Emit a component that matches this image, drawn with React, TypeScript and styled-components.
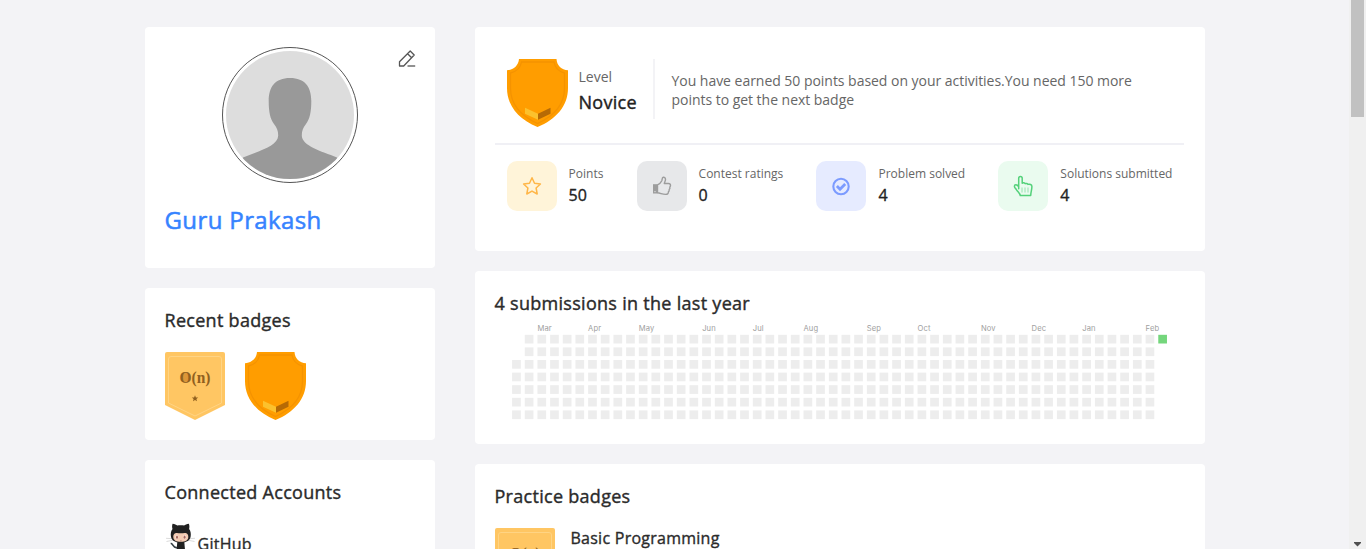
import React from "react";
import styled, { createGlobalStyle, css } from "styled-components";

const GlobalStyle = createGlobalStyle`
  * { box-sizing: border-box; }
  body {
    margin: 0;
    background: #f3f3f6;
    color: #2b2b2b;
    font-family: "Open Sans", sans-serif;
    overflow: hidden;
  }
  svg { display: block; flex: none; }
`;

/* Medium weight: the regular face, slightly thickened and spaced. */
const medium = css`
  font-weight: 400;
  letter-spacing: 0.016em;
  -webkit-text-stroke: 0.022em currentColor;
`;

const Page = styled.div`
  display: flex;
  height: 549px;
  overflow: hidden;
`;

const Content = styled.main`
  flex: 1;
  display: flex;
  align-items: flex-start;
  gap: 40px;
  padding: 27px 0 0 145px;
`;

const Column = styled.div<{ $width: number }>`
  width: ${(p) => p.$width}px;
  display: flex;
  flex-direction: column;
  gap: 20px;
`;

const Card = styled.section<{ $height: number }>`
  height: ${(p) => p.$height}px;
  padding: 20px;
  background: #fff;
  border-radius: 4px;
`;

const CardTitle = styled.h2`
  ${medium}
  margin: 0 0 0 -0.5px;
  font-size: 18px;
  line-height: 25px;
`;

const ProfileTop = styled.div`
  display: grid;
  grid-template-columns: 1fr 136px 1fr;
`;

const Avatar = styled.div`
  grid-column: 2;
  width: 136px;
  height: 136px;
  padding: 3px;
  border: 1px solid #555;
  border-radius: 50%;

  svg { border-radius: 50%; }
`;

const EditButton = styled.button`
  justify-self: end;
  align-self: start;
  margin: 2.5px -1px 0 0;
  padding: 0;
  border: 0;
  background: none;
  color: #555;
`;

const Name = styled.h1`
  ${medium}
  margin: 20px 0 0 -0.5px;
  color: #3683ff;
  font-size: 24px;
  line-height: 33px;
`;

const BadgeRow = styled.div`
  display: flex;
  gap: 20px;
  margin-top: 19px;
`;

const AccountRow = styled.div`
  display: flex;
  align-items: flex-start;
  gap: 2px;
  margin-top: 18px;
`;

const AccountName = styled.span`
  ${medium}
  margin: 10px 0 0 -0.5px;
  font-size: 16px;
  line-height: 22px;
`;

const LevelRow = styled.div`
  display: flex;
  height: 96px;
  padding: 12px 12px 0;
`;

const LevelInfo = styled.div`
  width: 74.5px;
  margin-left: 10.5px;
  padding-top: 8px;
`;

const Label = styled.div<{ $size: number }>`
  color: #666;
  font-size: ${(p) => p.$size}px;
  line-height: ${(p) => (p.$size === 14 ? 20 : 17)}px;
  white-space: nowrap;
`;

const LevelName = styled.div`
  ${medium}
  margin-top: 3px;
  font-size: 18px;
  line-height: 25px;
  color: #222;
`;

const LevelText = styled.p`
  flex: 1;
  height: 60px;
  margin: 0;
  padding: 12px 32px 0 16.5px;
  border-left: 2px solid #f3f3f6;
  color: #666;
  font-size: 14px;
  letter-spacing: -0.03px;
  line-height: 19px;
`;

const Rule = styled.hr`
  width: 689px;
  height: 2px;
  margin: 0;
  border: 0;
  background: #f0f0f5;
`;

const Stats = styled.div`
  display: flex;
  justify-content: space-between;
  padding: 16px 12.5px 0 11.6px;
`;

const Stat = styled.div`
  display: flex;
  gap: 12px;
`;

const StatIcon = styled.div<{ $bg: string; $color: string }>`
  display: flex;
  align-items: center;
  justify-content: center;
  width: 50px;
  height: 50px;
  border-radius: 10px;
  background: ${(p) => p.$bg};
  color: ${(p) => p.$color};
`;

const StatText = styled.div`
  padding-top: 4px;
`;

const StatValue = styled.div`
  ${medium}
  letter-spacing: 0;
  margin-top: 2px;
  font-size: 16px;
  line-height: 22px;
  color: #222;
`;

const Chart = styled.svg`
  margin: 5px 0 0 10px;
  font-family: Inter, sans-serif;
  font-size: 7.6px;
  letter-spacing: 0.1px;
  fill: #a0a0a0;
`;

const PracticeRow = styled.div`
  display: flex;
  gap: 16px;
  margin-top: 19px;
`;

const PracticeName = styled.div`
  ${medium}
  margin: -1px 0 0 -0.5px;
  font-size: 16px;
  line-height: 23px;
`;

const ScrollTrack = styled.div`
  display: flex;
  flex-direction: column;
  align-items: center;
  justify-content: space-between;
  width: 17px;
  padding-bottom: 2px;
  background: #f0f0f0;
`;

const ScrollThumb = styled.div`
  width: 13px;
  height: 117px;
  background: #c1c1c1;
`;

const Silhouette = () => (
  <svg width="128" height="128" viewBox="0 0 128 128">
    <rect width="128" height="128" fill="#ddd" />
    <path
      fill="#999"
      d="M64 27C49 27 42.700 36 42.700 50c0 11 1.500 18 5.300 23 3 4 4.200 7 4.200 11.500C52 95 33 100 17 106.500L10 128h108l-7-21.500C95 100 76 95 75.800 84.500 75.800 80 77 77 80 73c3.800-5 5.300-12 5.300-23C85.300 36 79 27 64 27z"
    />
  </svg>
);

const EditIcon = () => (
  <svg width="18" height="18" viewBox="0 0 18 18" fill="none" stroke="currentColor" strokeWidth="1.300">
    <path d="M1.500 16v-4.300L12.200 1l4 4L5.700 16zM9.600 3.700l4 4" strokeLinejoin="round" />
    <path d="M9.500 16h7.700" />
  </svg>
);

const ShieldBadge = () => (
  <svg width="61" height="68" viewBox="0 0 61 68">
    <path
      fill="#ff9d00"
      d="M12 0h37.500c.3 6.500 5 11 11.500 11.300V29c0 18-12 31.500-30.500 39C12 60.500 0 47 0 29V11.300C6.500 11 11.500 6.500 12 0z"
    />
    <path
      fill="none"
      stroke="#f59300"
      strokeWidth="1.300"
      d="M14.500 3h32.500c1 6 4.500 9.500 10.500 11V29c0 16-10.500 28-27 35.500C14 57 3.500 45 3.500 29V14c6-1.500 10-5 11-11z"
    />
    <path fill="#fcc12d" d="M18 48.700l13 6v6l-13-6z" />
    <path fill="#b66a05" d="M43.500 48.700l-12.500 6v6l12.500-6z" />
  </svg>
);

const ComplexityBadge = () => (
  <svg width="60" height="68" viewBox="0 0 60 68">
    <path fill="#ffc663" d="M2 0h56q2 0 2 2v51L30 68 0 53V2q0-2 2-2z" />
    <path
      fill="none"
      stroke="#ffd484"
      d="M6 4.500h48q2.500 0 2.500 2.500v44L30 64 3.500 51V7q0-2.500 2.500-2.500z"
    />
    <ellipse cx="20.300" cy="25.300" rx="4" ry="4.800" fill="#dc9638" />
    <text
      x="14.500"
      y="30.700"
      fontFamily="Liberation Serif, serif"
      fontWeight="700"
      fontSize="16"
      textLength="31"
      lengthAdjust="spacingAndGlyphs"
      fill="#90601f"
    >
      O(n)
    </text>
    <path fill="#90601f" d="M30 43.200l.9 2.200 2.300.1-1.800 1.500.6 2.300-2-1.300-2 1.300.6-2.300-1.800-1.500 2.300-.1z" />
  </svg>
);

const Octocat = () => (
  <svg width="31" height="30" viewBox="0 0 31 30">
    <path
      fill="none"
      stroke="#ccc"
      strokeWidth=".7"
      d="M1 15.300l7 .4M1.500 18.500l6.500-1.300M30 15.300l-7 .4M29.500 18.500L23 17.200"
    />
    <path
      fill="#202020"
      d="M7.600.8c2 .2 3.800 1 4.700 1.800 2-.5 5-.5 6.800 0 1-.9 2.700-1.600 4.700-1.800.8 1.700.7 3.700.3 5.100 1.500 2 2 4.500 1.600 7.400-.6 4-3.500 6.300-9.900 6.300s-9.300-2.300-9.900-6.300c-.4-2.900.1-5.400 1.600-7.400-.5-1.400-.6-3.400.1-5.100z"
    />
    <path
      fill="#f4cbb2"
      d="M11 10c1.500-.3 3 .3 4.800.3S19 9.700 20.600 10c2 .4 2.900 2.200 2.700 4.300-.3 3.300-2.800 4.500-7.500 4.500s-7.200-1.200-7.500-4.500C8.100 12.200 9 10.400 11 10z"
    />
    <ellipse cx="11.800" cy="14" rx="1.500" ry="2.200" fill="#fbe9df" />
    <ellipse cx="19.800" cy="14" rx="1.500" ry="2.200" fill="#fbe9df" />
    <ellipse cx="12" cy="14.200" rx="1" ry="1.600" fill="#a5665c" />
    <ellipse cx="19.600" cy="14.200" rx="1" ry="1.600" fill="#a5665c" />
    <path d="M15 17.500q.8.500 1.600 0" fill="none" stroke="#a5665c" strokeWidth=".5" />
    <path fill="#202020" d="M12.300 19h7l1 11h-9z" />
    <path d="M12 24.500c-4 1-3.500-3.800-6.300-4.300" fill="none" stroke="#333d42" strokeWidth="1.600" />
  </svg>
);

const StarIcon = () => (
  <svg width="20" height="20" viewBox="0 0 20 20" fill="none" stroke="currentColor" strokeWidth="1.500">
    <path d="M10 1.800l2.500 5.500 5.900.7-4.300 4 1.100 6L10 15.100 4.800 18l1.100-6-4.300-4 5.900-.7z" strokeLinejoin="round" />
  </svg>
);

const ThumbIcon = () => (
  <svg width="20" height="20" viewBox="0 0 20 20" fill="none" stroke="currentColor" strokeWidth="1.400">
    <path d="M1 8.200h4.500v9.300H1z" fill="currentColor" stroke="none" />
    <path
      d="M5.500 8.800C7.500 8 9 6.500 9.800 4.800c.4-1 .1-3.400 1.500-3.600 1.300-.2 2.200 1 2.200 2.300 0 1.500-1 2.600-1.200 4h4.200c1.300 0 2 .9 2 2 0 .7-.4 1.200-.7 1.600.3.900.1 1.800-.6 2.500.1.900-.1 1.700-.8 2.300.1 1.900-1.100 2.500-2.800 2.500-3.400 0-4.800-1.200-8.100-1.600z"
      strokeLinejoin="round"
    />
    <circle cx="3" cy="15.600" r=".7" fill="#e7e8ea" stroke="none" />
  </svg>
);

const CheckIcon = () => (
  <svg width="20" height="20" viewBox="0 0 20 20" fill="none" stroke="currentColor">
    <circle cx="10" cy="10.500" r="7.700" strokeWidth="2.100" />
    <path d="M5.900 10.100l3.100 3.100 5.200-5.200" strokeWidth="2.800" />
  </svg>
);

const HandIcon = () => (
  <svg width="20" height="22" viewBox="0 0 20 22" fill="none" stroke="currentColor" strokeWidth="1.500">
    <path
      d="M5.700 13.800V3.300c0-2.500 3.500-2.500 3.500 0v5c.8-.8 2.500-.6 3 .4 1-.6 2.300-.2 2.800.7 1.700-.5 3.900.1 3.900 2.200 0 3.600-1.100 4.800-1.200 9H7.300c-.3-2.500-2.300-3.600-3.800-5.800-.8-1.200-2.100-2.200-2.100-3.600 0-1.600 2.400-2.300 4.300.6z"
      strokeLinejoin="round"
    />
    <path d="M9 12.500v5M12 12.500v5M15 12.500v5" strokeWidth=".9" opacity=".6" />
  </svg>
);

const stats = [
  { label: "Points", value: 50, bg: "#fff4d9", color: "#ffb648", icon: <StarIcon /> },
  { label: "Contest ratings", value: 0, bg: "#e7e8ea", color: "#9d9d9d", icon: <ThumbIcon /> },
  { label: "Problem solved", value: 4, bg: "#e6ebff", color: "#7c9bff", icon: <CheckIcon /> },
  { label: "Solutions submitted", value: 4, bg: "#eafbef", color: "#54d17a", icon: <HandIcon /> },
];

const months: [string, number][] = [
  ["Mar", 2], ["Apr", 6], ["May", 10], ["Jun", 15], ["Jul", 19], ["Aug", 23],
  ["Sep", 28], ["Oct", 32], ["Nov", 37], ["Dec", 41], ["Jan", 45], ["Feb", 50],
];

const PITCH = 12.67;
const CELL = 8.7;
const LEFT = 7.1;
const TOP = 13.8;

const SubmissionChart = () => {
  const cells: React.ReactNode[] = [];
  for (let week = 0; week < 52; week++) {
    const first = week === 0 ? 2 : 0;
    const last = week === 51 ? 0 : 6;
    for (let day = first; day <= last; day++) {
      cells.push(
        <rect
          key={`${week}-${day}`}
          x={LEFT + week * PITCH}
          y={TOP + day * 12.6}
          width={CELL}
          height={CELL}
          fill={week === 51 ? "#74d67c" : "#ededed"}
        />
      );
    }
  }
  return (
    <Chart width="670" height="105">
      {months.map(([name, week]) => (
        <text key={name} x={LEFT + week * PITCH} y="10">
          {name}
        </text>
      ))}
      {cells}
    </Chart>
  );
};

export default function App() {
  return (
    <Page>
      <GlobalStyle />
      <Content>
        <Column $width={290}>
          <Card $height={241}>
            <ProfileTop>
              <Avatar>
                <Silhouette />
              </Avatar>
              <EditButton aria-label="Edit profile">
                <EditIcon />
              </EditButton>
            </ProfileTop>
            <Name>Guru Prakash</Name>
          </Card>
          <Card $height={152}>
            <CardTitle>Recent badges</CardTitle>
            <BadgeRow>
              <ComplexityBadge />
              <ShieldBadge />
            </BadgeRow>
          </Card>
          <Card $height={160}>
            <CardTitle>Connected Accounts</CardTitle>
            <AccountRow>
              <Octocat />
              <AccountName>GitHub</AccountName>
            </AccountRow>
          </Card>
        </Column>
        <Column $width={730}>
          <Card $height={224}>
            <LevelRow>
              <ShieldBadge />
              <LevelInfo>
                <Label $size={14}>Level</Label>
                <LevelName>Novice</LevelName>
              </LevelInfo>
              <LevelText>
                You have earned 50 points based on your activities.You need 150 more points to get the next badge
              </LevelText>
            </LevelRow>
            <Rule />
            <Stats>
              {stats.map((s) => (
                <Stat key={s.label}>
                  <StatIcon $bg={s.bg} $color={s.color}>
                    {s.icon}
                  </StatIcon>
                  <StatText>
                    <Label $size={12}>{s.label}</Label>
                    <StatValue>{s.value}</StatValue>
                  </StatText>
                </Stat>
              ))}
            </Stats>
          </Card>
          <Card $height={173}>
            <CardTitle>4 submissions in the last year</CardTitle>
            <SubmissionChart />
          </Card>
          <Card $height={160}>
            <CardTitle>Practice badges</CardTitle>
            <PracticeRow>
              <ComplexityBadge />
              <PracticeName>Basic Programming</PracticeName>
            </PracticeRow>
          </Card>
        </Column>
      </Content>
      <ScrollTrack>
        <ScrollThumb />
        <svg width="7" height="5" viewBox="0 0 7 5">
          <path d="M0 0h7v1L3.500 4.500 0 1z" fill="#505050" />
        </svg>
      </ScrollTrack>
    </Page>
  );
}
